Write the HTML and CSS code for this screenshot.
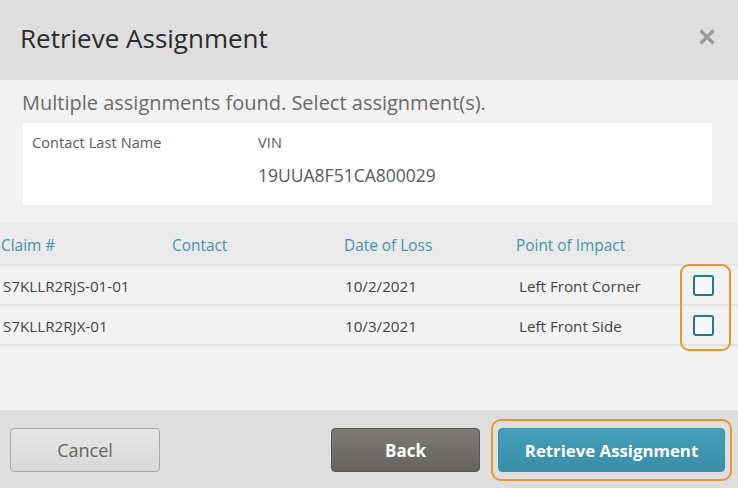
FILE: index.html
```html
<!DOCTYPE html>
<html>
<head>
<meta charset="utf-8">
<link rel="stylesheet" href="styles.css">
</head>
<body>
<div class="modal">
  <div class="header">
    <h1 class="title">Retrieve Assignment</h1>
    <span class="close">
      <svg width="18" height="18" viewBox="0 0 18 18"><path d="M2.5 2.5 L15.5 15.5 M15.5 2.5 L2.5 15.5" stroke="#9a9a9a" stroke-width="3.2" stroke-linecap="butt"/></svg>
    </span>
  </div>
  <div class="body">
    <p class="message">Multiple assignments found. Select assignment(s).</p>
    <div class="criteria">
      <div class="field field-name">
        <div class="label">Contact Last Name</div>
      </div>
      <div class="field">
        <div class="label">VIN</div>
        <div class="value">19UUA8F51CA800029</div>
      </div>
    </div>
    <div class="table">
      <div class="row head">
        <div class="c1">Claim #</div>
        <div class="c2">Contact</div>
        <div class="c3">Date of Loss</div>
        <div class="c4">Point of Impact</div>
        <div class="c5"></div>
      </div>
      <div class="rows">
        <div class="row">
          <div class="c1 d1">S7KLLR2RJS-01-01</div>
          <div class="c2"></div>
          <div class="c3 d3">10/2/2021</div>
          <div class="c4 d4">Left Front Corner</div>
          <div class="c5"><span class="check"></span></div>
        </div>
        <div class="row">
          <div class="c1 d1">S7KLLR2RJX-01</div>
          <div class="c2"></div>
          <div class="c3 d3">10/3/2021</div>
          <div class="c4 d4">Left Front Side</div>
          <div class="c5"><span class="check"></span></div>
        </div>
        <div class="check-hl"></div>
      </div>
    </div>
  </div>
  <div class="footer">
    <button class="btn btn-cancel">Cancel</button>
    <div class="right">
      <button class="btn btn-back">Back</button>
      <div class="hl-wrap"><button class="btn btn-primary">Retrieve Assignment</button></div>
    </div>
  </div>
</div>
</body>
</html>
```
FILE: styles.css
```css
* { box-sizing: border-box; }
html, body { margin: 0; padding: 0; }
body {
  width: 738px;
  height: 488px;
  overflow: hidden;
  font-family: "Open Sans", "Noto Sans", sans-serif;
  background: #f3f2f2;
}
.modal {
  width: 738px;
  height: 488px;
  display: flex;
  flex-direction: column;
}
.header {
  height: 80px;
  background: #dedede;
  display: flex;
  align-items: center;
  justify-content: space-between;
  padding: 0 20px 4px 20px;
}
.title {
  margin: 0;
  font-size: 26px;
  line-height: 32px;
  font-weight: 400;
  color: #2b2b2b;
}
.close {
  display: flex;
  margin-right: 2px;
  margin-top: -2px;
}
.body {
  flex: 1;
  background: #f3f2f2;
  display: flex;
  flex-direction: column;
}
.message {
  margin: 10px 0 0 22px;
  font-size: 20px;
  line-height: 26px;
  color: #6a6a6a;
}
.criteria {
  margin: 7px 26px 0 23px;
  height: 82px;
  background: #fff;
  display: flex;
  padding: 10px 0 0 9px;
}
.field-name { width: 226px; }
.label {
  font-size: 14.5px;
  line-height: 20px;
  color: #5a5a5a;
  letter-spacing: 0.1px;
}
.value {
  margin-top: 11px;
  font-size: 17.5px;
  line-height: 22px;
  color: #5a5a5a;
}
.table {
  margin-top: 18px;
}
.row {
  display: flex;
  align-items: center;
}
.row.head {
  height: 43px;
  background: #ebeaea;
  color: #3f95ac;
  font-size: 15.4px;
  padding-top: 3px;
  border-bottom: 2px solid #e2e2e2;
}
.rows {
  position: relative;
}
.rows .row {
  height: 40px;
  border-bottom: 2px solid #e2e2e2;
  font-size: 15.2px;
  color: #444;
  padding-top: 1px;
}
.c1 { width: 172px; padding-left: 1px; }
.c2 { width: 172px; }
.c3 { width: 172px; }
.c4 { width: 176px; }
.c5 { flex: 1; display: flex; }
.d1 { padding-left: 3px; }
.d3 { padding-left: 1px; }
.d4 { padding-left: 3px; }
.check {
  width: 21px;
  height: 21px;
  border: 2.5px solid #1f7a92;
  border-radius: 3px;
  background: #f7f7f7;
  margin-left: 1px;
}
.check-hl {
  position: absolute;
  left: 680px;
  top: -2px;
  width: 51px;
  height: 87px;
  border: 2px solid #e8972e;
  border-radius: 9px;
}
.footer {
  height: 78px;
  background: #dedede;
  display: flex;
  align-items: center;
  justify-content: space-between;
  padding: 2px 6px 0 10px;
}
.right {
  display: flex;
  align-items: center;
  gap: 11px;
}
.btn {
  height: 44px;
  border-radius: 4px;
  font-family: "Open Sans", "Noto Sans", sans-serif;
}
.btn-cancel {
  width: 150px;
  background: linear-gradient(#e6e6e6, #d8d8d8);
  border: 1.5px solid #a9a9a9;
  color: #666;
  font-size: 18px;
}
.btn-back {
  width: 149px;
  background: linear-gradient(#7d7b77, #65635f);
  border: 1px solid #5a5854;
  color: #fff;
  font-weight: 700;
  font-size: 17px;
}
.hl-wrap {
  border: 2px solid #e8972e;
  border-radius: 10px;
  padding: 7px 5px;
}
.btn-primary {
  width: 227px;
  display: block;
  background: linear-gradient(#42a0b8, #3a8ea6);
  border: 1px solid #3a8ea6;
  color: #fff;
  font-weight: 700;
  font-size: 16.8px;
}
```
